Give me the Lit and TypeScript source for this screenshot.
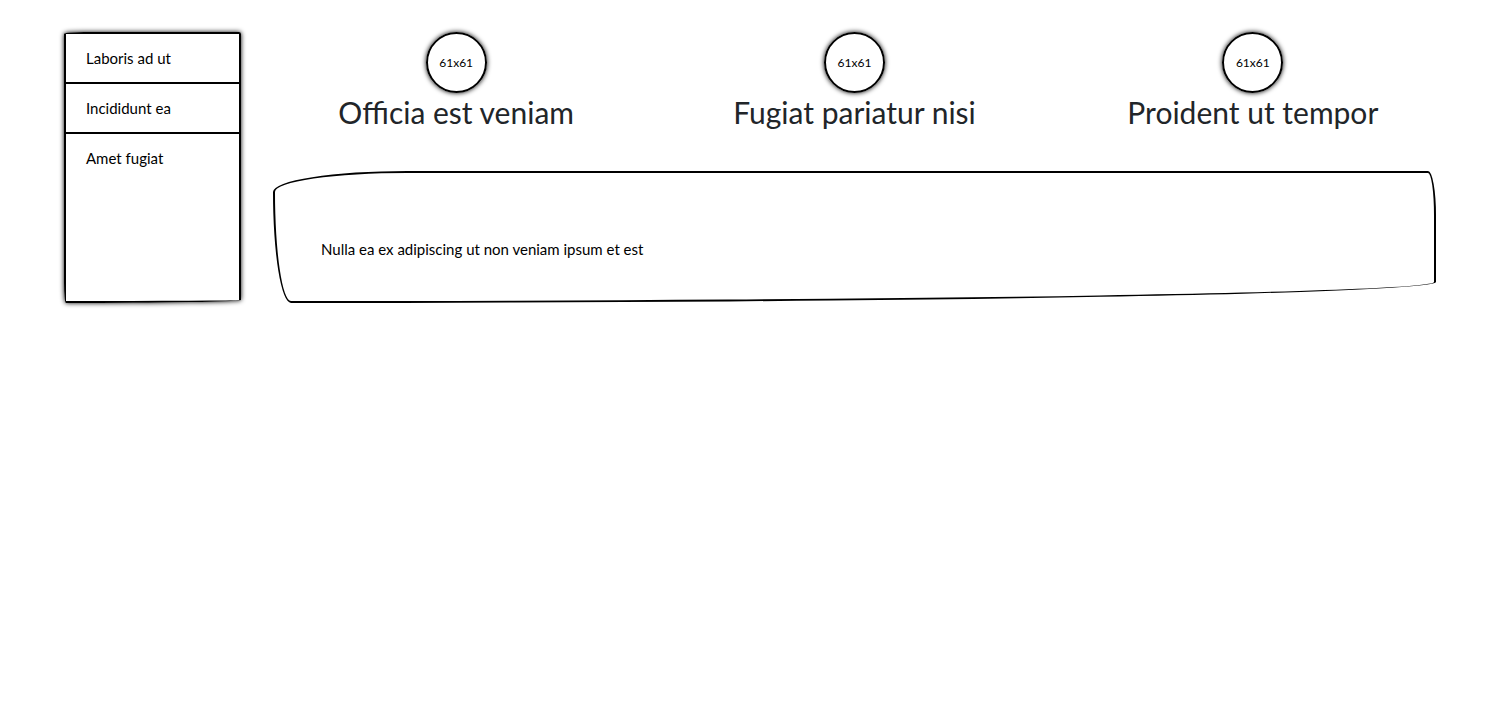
import { LitElement, html, css } from "lit";
import { customElement } from "lit/decorators.js";

const links = ["Laboris ad ut", "Incididunt ea", "Amet fugiat"];
const topics = ["Officia est veniam", "Fugiat pariatur nisi", "Proident ut tempor"];

@customElement("app-root")
class AppRoot extends LitElement {
  static styles = css`
    :host {
      display: block;
      background: #fff;
      color: #000;
      font: 15px/24px Lato, "Open Sans", sans-serif;
    }
    * {
      box-sizing: border-box;
    }
    .page {
      display: grid;
      grid-template-columns: 177px minmax(0, 1fr);
      gap: 32px;
      padding: 32px 64px;
    }
    .menu {
      overflow: hidden;
      border: 2px solid #000;
      border-radius: 20px 2px 175px 2px / 2px 2px 3px 20px;
      box-shadow: 0 0 5px #000;
    }
    .list {
      margin: 0;
      padding: 0;
      list-style: none;
    }
    .item + .item {
      border-top: 2px solid #000;
    }
    .link {
      display: block;
      padding: 12px 20px;
      color: inherit;
      text-decoration: none;
    }
    .content {
      display: grid;
      gap: 32px;
    }
    .topics {
      display: grid;
      grid-template-columns: repeat(3, minmax(0, 1fr));
      gap: 32px;
    }
    .topic {
      display: flex;
      flex-direction: column;
      align-items: center;
    }
    .avatar {
      display: grid;
      place-items: center;
      width: 61px;
      height: 61px;
      border: 2px solid #000;
      border-radius: 50%;
      box-shadow: 0 0 5px #000;
      font-size: 12px;
    }
    .title {
      margin: 0 0 8px;
      color: #212529;
      font-size: 30px;
      font-weight: 400;
      line-height: 38px;
      text-align: center;
    }
    .panel {
      padding: 64px 46px 40px;
      border: 2px solid #000;
      border-radius: 134px 8px 1145px 18px / 21px 44px 21px 111px;
    }
    .text {
      margin: 0;
    }
  `;

  render() {
    return html`
      <div class="page">
        <nav class="menu">
          <ul class="list">
            ${links.map((label) => html`<li class="item"><a class="link" href="#">${label}</a></li>`)}
          </ul>
        </nav>
        <main class="content">
          <div class="topics">
            ${topics.map(
              (title) => html`
                <section class="topic">
                  <div class="avatar">61x61</div>
                  <h2 class="title">${title}</h2>
                </section>
              `
            )}
          </div>
          <div class="panel">
            <p class="text">Nulla ea ex adipiscing ut non veniam ipsum et est</p>
          </div>
        </main>
      </div>
    `;
  }
}
